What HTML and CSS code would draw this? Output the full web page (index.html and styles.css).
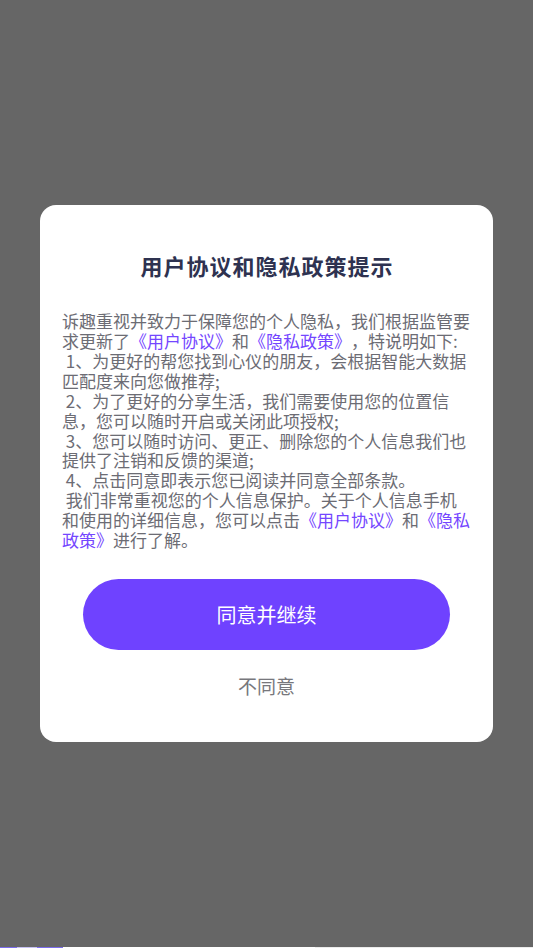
FILE: index.html
```html
<!DOCTYPE html>
<html lang="zh-CN">
<head>
<meta charset="utf-8">
<title>用户协议和隐私政策提示</title>
<link rel="stylesheet" href="styles.css">
</head>
<body>
<div class="screen">
  <div class="overlay">
    <div class="dialog">
      <h1 class="title">用户协议和隐私政策提示</h1>
      <p class="content">诉趣重视并致力于保障您的个人隐私，我们根据监管要求更新了<span class="link">《用户协议》</span>和<span class="link">《隐私政策》</span>，特说明如下:<br>&nbsp;1、为更好的帮您找到心仪的朋友，会根据智能大数据匹配度来向您做推荐;<br>&nbsp;2、为了更好的分享生活，我们需要使用您的位置信息，您可以随时开启或关闭此项授权;<br>&nbsp;3、您可以随时访问、更正、删除您的个人信息我们也提供了注销和反馈的渠道;<br>&nbsp;4、点击同意即表示您已阅读并同意全部条款。<br>&nbsp;我们非常重视您的个人信息保护。关于个人信息手机和使用的详细信息，您可以点击<span class="link">《用户协议》</span>和<span class="link">《隐私政策》</span>进行了解。</p>
      <button class="agree" type="button">同意并继续</button>
      <button class="disagree" type="button">不同意</button>
    </div>
  </div>
  <div class="edge">
    <span class="seg seg-a"></span>
    <span class="seg seg-b"></span>
    <span class="seg seg-c"></span>
    <span class="seg seg-d"></span>
    <span class="seg seg-e"></span>
  </div>
</div>
</body>
</html>
```

FILE: styles.css
```css
* {
  box-sizing: border-box;
}

html, body {
  margin: 0;
  padding: 0;
  height: 100%;
}

body {
  font-family: "Noto Sans CJK SC", "Noto Sans", sans-serif;
  background: #ffffff;
  text-spacing-trim: space-all;
}

.screen {
  height: 948px;
  display: flex;
  flex-direction: column;
}

.overlay {
  flex: 1;
  background: #666666;
  display: flex;
  align-items: center;
  justify-content: center;
}

.dialog {
  width: 453px;
  background: #ffffff;
  border-radius: 16px;
  padding: 45px 22px 44px;
  display: flex;
  flex-direction: column;
  align-items: center;
}

.title {
  margin: 0;
  font-size: 22px;
  line-height: 30px;
  font-weight: 700;
  letter-spacing: 1px;
  text-indent: 1px;
  color: #2e3250;
  text-align: center;
}

.content {
  margin: 31px 0 0;
  width: 409px;
  font-size: 17px;
  line-height: 19.9px;
  color: #6c6c74;
  text-align: left;
  text-spacing-trim: space-all;
}

.link {
  color: #7446ff;
}

.agree {
  margin-top: 29px;
  width: 367px;
  height: 71px;
  border: none;
  border-radius: 36px;
  background: #6f42ff;
  color: #ffffff;
  font-family: inherit;
  font-size: 20px;
  padding: 0;
}

.disagree {
  margin-top: 24px;
  border: none;
  background: none;
  padding: 0;
  font-family: inherit;
  font-size: 19px;
  line-height: 24px;
  color: #77777c;
}

.edge {
  height: 1px;
  display: flex;
}

.seg {
  display: block;
  height: 1px;
}

.seg-a { width: 17px; background: #7b6cec; }
.seg-b { width: 20px; background: #c6c1f2; }
.seg-c { width: 26px; background: #7b6cec; }
.seg-d { width: 252px; background: #ffffff; }
.seg-e { flex: 1; background: #ececec; }
```
